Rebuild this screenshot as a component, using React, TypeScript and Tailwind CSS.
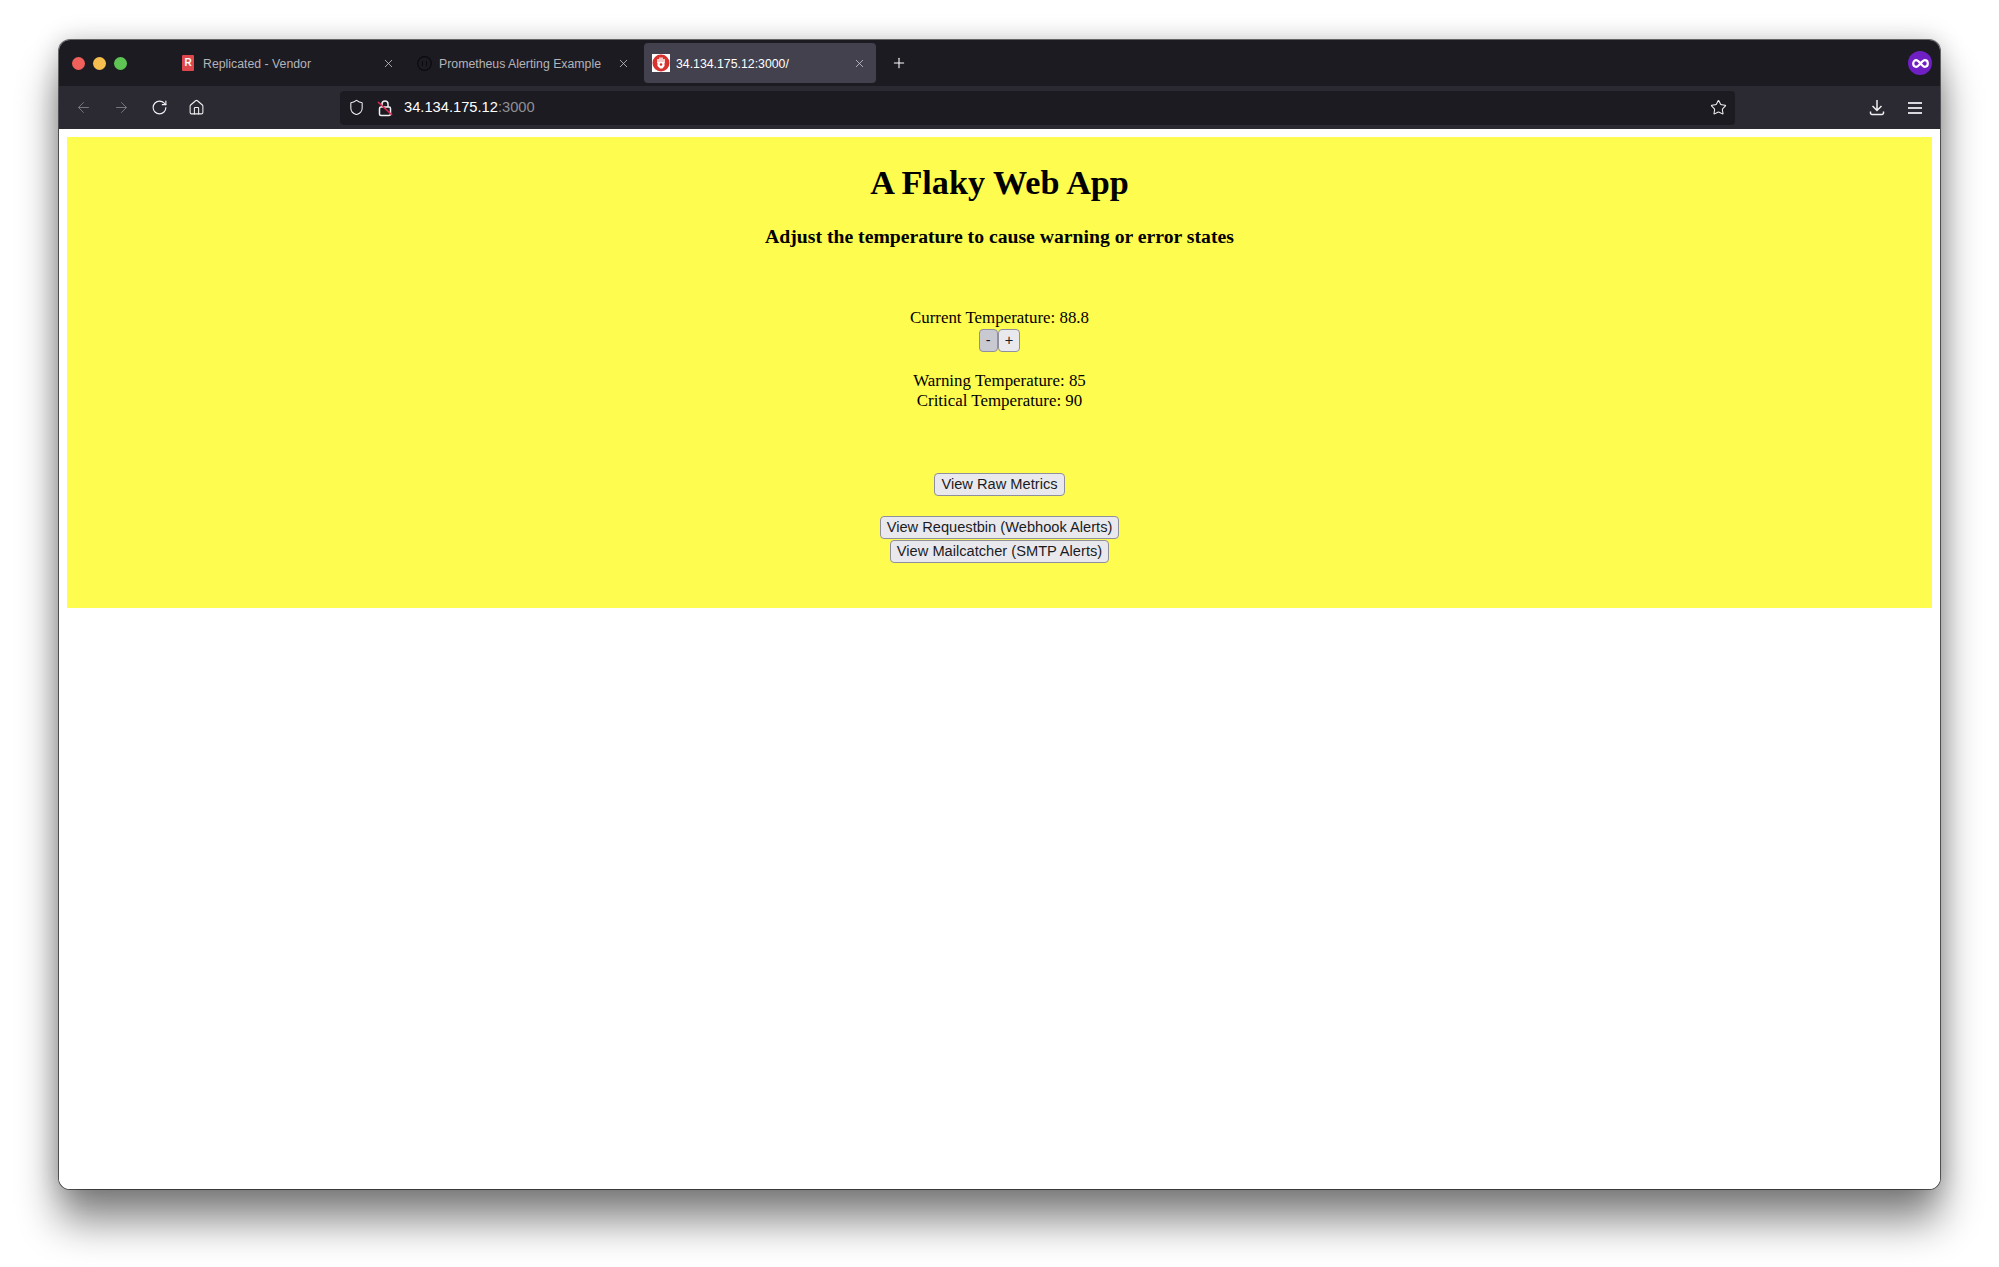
import React from "react";
import { ArrowLeft, ArrowRight, RotateCw, House, Shield, Star, X, Plus } from "lucide-react";

const serif = "font-['Liberation_Serif',_'Times_New_Roman',_serif]";

function ReplicatedIcon() {
  return (
    <div className="flex h-4 w-3 items-center justify-center rounded-[1px] bg-[#e0474c] font-['Liberation_Sans',_sans-serif] text-[10px] font-bold leading-none text-white">
      R
    </div>
  );
}

function CounterIcon() {
  return (
    <svg width="15" height="15" viewBox="0 0 15 15" fill="none">
      <circle cx="7.5" cy="7.5" r="6.8" stroke="#0b0b0e" strokeWidth="1.2" />
      <path d="M5.5 5v5M9.5 5v5" stroke="#0b0b0e" strokeWidth="1" />
    </svg>
  );
}

function HandIcon() {
  return (
    <svg width="18" height="18" viewBox="0 0 18 18">
      <rect width="18" height="18" fill="#fff" />
      <circle cx="9" cy="9" r="8.5" fill="#d8322f" />
      <path d="M6 9V5M8 8V3.5M10 8V3.5M12 9V5" stroke="#fff" strokeWidth="1.5" />
      <path d="M5.5 8h7v4l-2 2.5H8L5.5 12z" fill="#fff" />
      <circle cx="9" cy="10.5" r="1.3" fill="#d8322f" />
    </svg>
  );
}

function Tab({
  icon,
  label,
  iconClass,
  active,
}: {
  icon: React.ReactNode;
  label: string;
  iconClass: string;
  active?: boolean;
}) {
  return (
    <div
      className={
        active
          ? "mr-[3px] flex h-[40px] w-[232px] items-center rounded-[4px] bg-[#42414d] pl-2 pr-[10px] text-white"
          : "mr-[3px] flex h-[40px] w-[232px] items-center pl-2 pr-[11px] text-[#b4b3b8]"
      }
    >
      <div className={`flex shrink-0 items-center ${iconClass}`}>{icon}</div>
      <span className="mt-[2px] whitespace-nowrap text-[12.3px]">{label}</span>
      <X className="ml-auto text-[#d0d0d4]" size={13} strokeWidth={1.4} />
    </div>
  );
}

function PageButton({ children, dark }: { children: React.ReactNode; dark?: boolean }) {
  return (
    <button
      className={
        dark
          ? "h-[23px] rounded-[4px] border border-[#8f8f9d] bg-[#c9c9d2] px-[6px] font-['Liberation_Sans',_sans-serif] text-[14.65px] leading-none text-[#1b1b1f]"
          : "h-[23px] rounded-[4px] border border-[#8f8f9d] bg-[#e9e9ed] px-[6px] font-['Liberation_Sans',_sans-serif] text-[14.65px] leading-none text-[#1b1b1f]"
      }
    >
      {children}
    </button>
  );
}

export default function App() {
  return (
    <div className="h-[1267px] w-full overflow-hidden bg-white px-[59px] pt-[40px] font-['Liberation_Sans',_sans-serif]">
      <div className="flex h-[1149px] w-full flex-col overflow-hidden rounded-[11px] bg-white shadow-[0_32px_42px_rgba(0,0,0,0.48),0_0_26px_rgba(0,0,0,0.22),0_0_0_1px_rgba(70,70,70,0.75)]">
        {/* title bar */}
        <div className="flex h-[46px] shrink-0 items-center bg-[#1c1b22] pl-[13px] pr-[8px]">
          <div className="flex gap-2">
            <div className="h-[13px] w-[13px] rounded-full bg-[#f1605a]" />
            <div className="h-[13px] w-[13px] rounded-full bg-[#f6bd4f]" />
            <div className="h-[13px] w-[13px] rounded-full bg-[#5ec454]" />
          </div>
          <div className="ml-[47px] flex items-center">
            <Tab icon={<ReplicatedIcon />} iconClass="w-[21px]" label="Replicated - Vendor" />
            <Tab icon={<CounterIcon />} iconClass="w-[22px]" label="Prometheus Alerting Example" />
            <Tab icon={<HandIcon />} iconClass="w-[24px]" label="34.134.175.12:3000/" active />
          </div>
          <Plus className="ml-[12px] text-white" size={16} strokeWidth={1.6} />
          <div className="ml-auto flex h-6 w-6 items-center justify-center rounded-full bg-[#6f1fc4]">
            <svg width="17" height="9" viewBox="0 0 17 9" fill="none">
              <path
                d="M4.3 1.2C2.5 1.2 1.2 2.7 1.2 4.5s1.3 3.3 3.1 3.3c2.6 0 5.8-6.6 8.4-6.6 1.8 0 3.1 1.5 3.1 3.3s-1.3 3.3-3.1 3.3c-2.6 0-5.8-6.6-8.4-6.6z"
                stroke="#fff"
                strokeWidth="2.2"
              />
            </svg>
          </div>
        </div>

        {/* toolbar */}
        <div className="flex h-[43px] shrink-0 items-center bg-[#2b2a33] pl-[16px] pr-[17px] text-[#f0f0f2]">
          <ArrowLeft className="text-[#77767d]" size={17} strokeWidth={1.4} />
          <ArrowRight className="ml-[21px] text-[#77767d]" size={17} strokeWidth={1.4} />
          <RotateCw className="ml-[21px]" size={17} strokeWidth={1.6} />
          <House className="ml-[20px]" size={17} strokeWidth={1.5} />
          <div className="ml-[135px] flex h-[34px] w-[1395px] items-center rounded-[4px] bg-[#1c1b22] pl-[8px] pr-[8px]">
            <Shield size={17} strokeWidth={1.5} />
            <svg className="ml-[12px]" width="16" height="18" viewBox="0 0 16 18" fill="none">
              <rect x="2.5" y="8" width="11" height="8.5" rx="1.5" stroke="#f0f0f2" strokeWidth="1.5" />
              <path d="M5 8V5a3 3 0 0 1 6 0v3" stroke="#f0f0f2" strokeWidth="1.5" />
              <path d="M1 3l14 13" stroke="#e22850" strokeWidth="1.6" />
            </svg>
            <span className="ml-[11px] text-[14.7px] text-white">
              34.134.175.12<span className="text-[#8f8f94]">:3000</span>
            </span>
            <Star className="ml-auto" size={17} strokeWidth={1.5} />
          </div>
          <svg className="ml-[134px]" width="16" height="17" viewBox="0 0 16 17" fill="none">
            <path d="M8 1v10M3.5 7L8 11.5 12.5 7M1.5 12.5v1.5a1.5 1.5 0 0 0 1.5 1.5h10a1.5 1.5 0 0 0 1.5-1.5v-1.5" stroke="#f0f0f2" strokeWidth="1.5" />
          </svg>
          <div className="ml-[23px] flex w-[14px] flex-col gap-[3px]">
            <div className="h-[2px] bg-[#d8d8dc]" />
            <div className="h-[2px] bg-[#d8d8dc]" />
            <div className="h-[2px] bg-[#d8d8dc]" />
          </div>
        </div>

        {/* page */}
        <div className={`flex-1 bg-white px-[8px] pt-[8px] text-black ${serif}`}>
          <div className="flex h-[471px] flex-col items-center bg-[#fffc50]">
            <h1 className="mt-[26px] text-[34.2px] font-bold leading-[40px]">A Flaky Web App</h1>
            <h3 className="mt-[21px] text-[19.7px] font-bold leading-[24px]">
              Adjust the temperature to cause warning or error states
            </h3>
            <p className="mt-[60px] text-[16.9px] leading-[20px]">Current Temperature: 88.8</p>
            <div className="mt-[1px] flex">
              <PageButton dark>-</PageButton>
              <PageButton>+</PageButton>
            </div>
            <p className="mt-[19px] text-[16.9px] leading-[20px]">Warning Temperature: 85</p>
            <p className="text-[16.9px] leading-[20px]">Critical Temperature: 90</p>
            <div className="mt-[61px]">
              <PageButton>View Raw Metrics</PageButton>
            </div>
            <div className="mt-[19px]">
              <PageButton>View Requestbin (Webhook Alerts)</PageButton>
            </div>
            <div>
              <PageButton>View Mailcatcher (SMTP Alerts)</PageButton>
            </div>
          </div>
        </div>
      </div>
    </div>
  );
}
